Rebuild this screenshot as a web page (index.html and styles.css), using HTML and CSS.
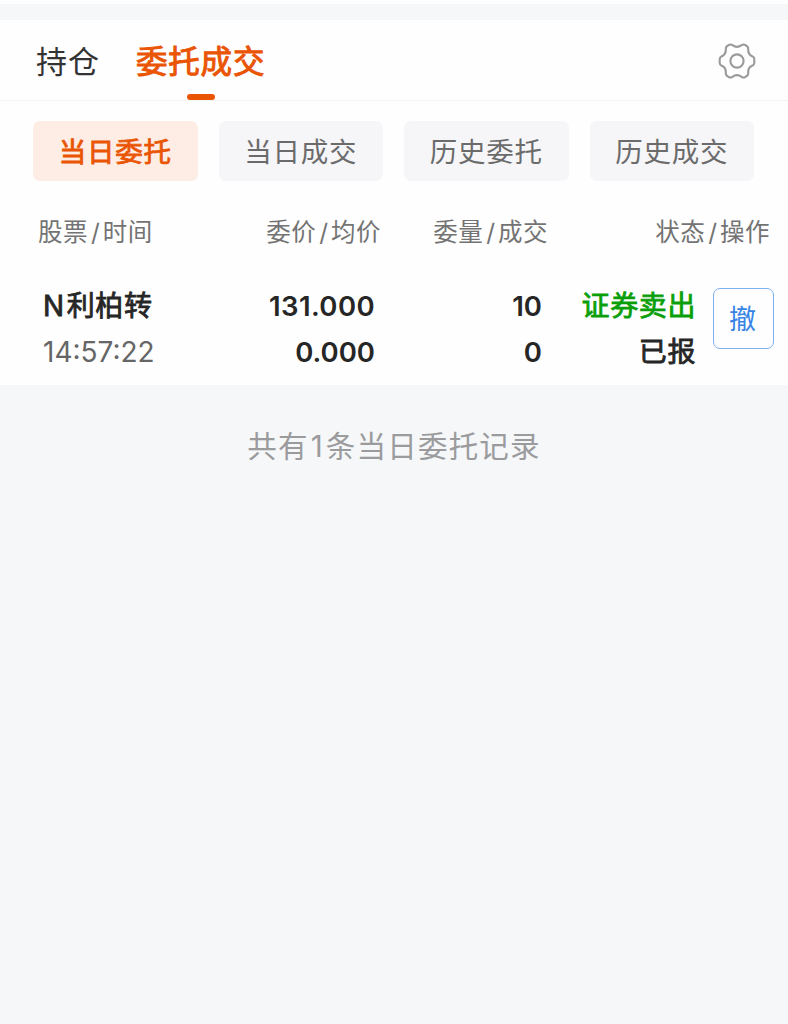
FILE: index.html
```html
<!DOCTYPE html>
<html lang="zh-CN">
<head>
<meta charset="utf-8">
<title>委托成交</title>
<link rel="stylesheet" href="styles.css">
</head>
<body>
<div class="divider"></div>
<main class="panel">
  <nav class="tabs">
    <a class="tab">持仓</a>
    <a class="tab tab-active">委托成交</a>
    <svg class="gear" viewBox="0 0 38 38" fill="none" stroke="#9a9a9a" stroke-width="2.1" stroke-linejoin="round">
      <path d="M10.5 3.2Q12.5 1.9 14.4 3.2C17.2 5.3 20.8 5.3 23.6 3.2Q25.5 1.9 27.5 3.2L29.2 4.4Q30.4 5.4 30.2 7.2C30 10.5 31.5 13.2 34.6 14.4Q36.2 15.2 36.3 17V21Q36.2 22.8 34.6 23.6C31.5 24.8 30 27.5 30.2 30.8Q30.4 32.6 29.2 33.6L27.5 34.8Q25.5 36.1 23.6 34.8C20.8 32.7 17.2 32.7 14.4 34.8Q12.5 36.1 10.5 34.8L8.8 33.6Q7.6 32.6 7.8 30.8C8 27.5 6.5 24.8 3.4 23.6Q1.8 22.8 1.7 21V17Q1.8 15.2 3.4 14.4C6.5 13.2 8 10.5 7.8 7.2Q7.6 5.4 8.8 4.4Z"/>
      <circle cx="19" cy="19" r="6.6"/>
    </svg>
  </nav>
  <div class="chips">
    <button class="chip chip-active">当日委托</button>
    <button class="chip">当日成交</button>
    <button class="chip">历史委托</button>
    <button class="chip">历史成交</button>
  </div>
  <div class="head">
    <span class="h-name">股票<i>/</i>时间</span>
    <span>委价<i>/</i>均价</span>
    <span>委量<i>/</i>成交</span>
    <span>状态<i>/</i>操作</span>
  </div>
  <div class="order">
    <div class="cell cell-name"><b class="name"><span class="mark">N</span>利柏转</b><span class="time">14:57:22</span></div>
    <div class="cell"><b class="price">131.000</b><b>0.000</b></div>
    <div class="cell"><b>10</b><b>0</b></div>
    <div class="cell cell-state"><b class="sell">证券卖出</b><b>已报</b></div>
    <button class="cancel">撤</button>
  </div>
</main>
<p class="summary">共有<span class="count">1</span>条当日委托记录</p>
</body>
</html>
```

FILE: styles.css
```css
* { box-sizing: border-box; }
body {
  margin: 0;
  padding-top: 4px;
  min-height: 1024px;
  background: linear-gradient(#fefefe 4px, #f5f7f9 4px);
  font-family: Inter, "Noto Sans CJK SC", sans-serif;
  color: #262626;
}
button { font: inherit; padding: 0; border: 0; }
.divider { height: 16px; }
.panel { height: 365px; background: #fefefe; }
.tabs {
  display: flex;
  align-items: center;
  height: 81px;
  padding: 0 32px 0 36px;
  border-bottom: 1px solid #f3f3f4;
}
.tab {
  display: flex;
  flex-direction: column;
  align-items: center;
  height: 80px;
  font-size: 31px;
  line-height: 84px;
  letter-spacing: 1px;
  color: #333;
}
.tab-active {
  margin-left: 36px;
  font-size: 31.5px;
  letter-spacing: .8px;
  color: #ea5504;
  -webkit-text-stroke: 1px #ea5504;
}
.tab-active::after {
  content: "";
  flex: none;
  width: 28px;
  height: 6px;
  margin-top: -10px;
  border-radius: 3px;
  background: #ea5504;
}
.gear { width: 38px; height: 38px; margin: 2px 0 0 auto; }
.chips {
  display: grid;
  grid-template-columns: repeat(4, 1fr);
  gap: 21px;
  padding: 20px 34px 0 33px;
}
.chip {
  height: 60px;
  border-radius: 7px;
  background: #f6f6f9;
  color: #6b6b6b;
  font-size: 27.5px;
  letter-spacing: .8px;
  line-height: 62px;
}
.chip-active { background: #fdede4; color: #ea5504; -webkit-text-stroke: .8px #ea5504; }
.head {
  display: grid;
  grid-template-columns: 172px 171px 167px 222px;
  height: 40px;
  margin-top: 31px;
  padding-left: 38px;
  font-size: 24.5px;
  line-height: 41px;
  letter-spacing: .5px;
  color: #737373;
  text-align: right;
}
.head .h-name { text-align: left; }
.head i { font-style: normal; padding: 0 2.5px 0 3px; }
.order {
  display: grid;
  grid-template-columns: 167px 165px 167px 154px 60px;
  margin-top: 31px;
  padding-left: 43px;
}
.cell {
  display: grid;
  grid-template-rows: 46px 46px;
  font-size: 27.5px;
  line-height: 46px;
  text-align: right;
  white-space: nowrap;
}
.cell b { font-weight: 600; }
.price { letter-spacing: .4px; }
.cell-name { text-align: left; }
.cell .name, .cell-state b {
  font-size: 28px;
  font-weight: 400;
  letter-spacing: .6px;
  line-height: 47px;
  -webkit-text-stroke: .8px currentColor;
}
.mark { padding-right: 2px; }
.time { font-size: 28px; color: #666; }
.cell .sell { color: #0a9f0a; }
.cancel {
  width: 61px;
  height: 61px;
  margin: 5px 0 0 17px;
  border: 1.5px solid #7fb0f0;
  border-radius: 7px;
  background: transparent;
  color: #3783e6;
  font-size: 27px;
  line-height: 58px;
  padding: 2px 2px 0 0;
}
.summary {
  margin: 38px 0 0;
  font-size: 29.5px;
  line-height: 46px;
  letter-spacing: 1.2px;
  text-align: center;
  color: #9b9b9d;
}
.count { padding: 0 2px; }
```
